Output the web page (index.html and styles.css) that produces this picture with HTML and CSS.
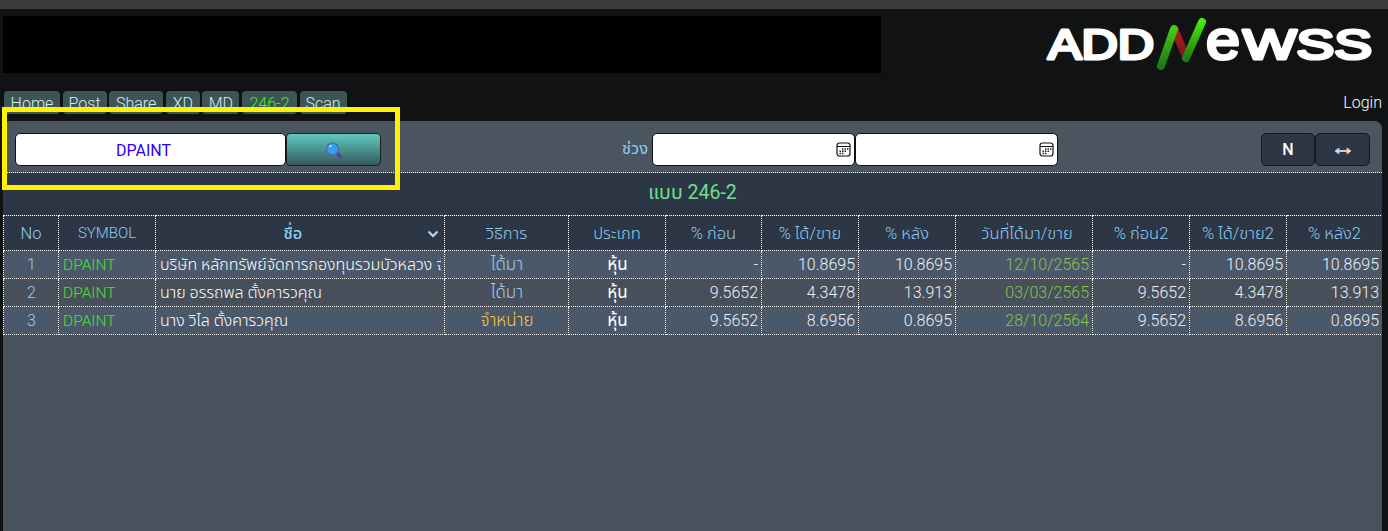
FILE: index.html
```html
<!DOCTYPE html>
<html lang="th">
<head>
<meta charset="utf-8">
<title>ADDNewss</title>
<link rel="stylesheet" href="styles.css">
</head>
<body>
<div class="topstrip"></div>
<header class="masthead">
  <div class="banner"></div>
  <svg class="logo" width="340" height="80" viewBox="0 -10 340 80" aria-label="ADDNewss">
    <defs>
      <linearGradient id="g1" x1="0" y1="1" x2="0" y2="0"><stop offset="0" stop-color="#1f7a14"/><stop offset="1" stop-color="#46c814"/></linearGradient>
      <linearGradient id="g2" x1="0" y1="1" x2="0" y2="0"><stop offset="0" stop-color="#1f7a14"/><stop offset="1" stop-color="#4ae80a"/></linearGradient>
      <linearGradient id="g3" x1="0" y1="0" x2="0" y2="1"><stop offset="0" stop-color="#c0161e"/><stop offset="1" stop-color="#6a1a1e"/></linearGradient>
    </defs>
    <text class="logo-word" x="8" y="49" textLength="106" lengthAdjust="spacingAndGlyphs">ADD</text>
    <text class="logo-word logo-e" x="166" y="49" textLength="34" lengthAdjust="spacingAndGlyphs">e</text>
    <text class="logo-word" x="203" y="49" textLength="129" lengthAdjust="spacingAndGlyphs">WSS</text>
    <path d="M131 22 L138 18 L150 46 L143 50 Z" fill="url(#g3)"/>
    <path d="M121 56 L134 19" stroke="url(#g1)" stroke-width="8" stroke-linecap="round" fill="none"/>
    <path d="M146 48 L162 12" stroke="url(#g2)" stroke-width="8" stroke-linecap="round" fill="none"/>
  </svg>
</header>
<nav class="tabs">
  <div class="tablist">
    <a class="tab">Home</a><a class="tab">Post</a><a class="tab">Share</a><a class="tab">XD</a><a class="tab">MD</a><a class="tab tab-active">246-2</a><a class="tab">Scan</a>
  </div>
  <a class="login">Login</a>
</nav>
<main class="panel">
  <section class="toolbar">
    <div class="search">
      <div class="field field-symbol">DPAINT</div>
      <button class="btn-search" type="button" aria-label="search">
        <svg width="18" height="18" viewBox="0 0 18 18">
          <path d="M10.5 11 L15.5 16" stroke="#5b3f9a" stroke-width="3.4" stroke-linecap="round"/>
          <circle cx="7.5" cy="8" r="6" fill="#35a0ee" stroke="#4a63b0" stroke-width="1.2"/>
          <circle cx="5.5" cy="5.3" r="1" fill="#dff2ff"/>
        </svg>
      </button>
    </div>
    <div class="range">
      <span class="range-label">ช่วง</span>
      <div class="field field-date"><svg class="cal" width="15" height="15" viewBox="0 0 15 15"><rect x="1" y="1" width="13" height="13" rx="2.5" fill="none" stroke="#111" stroke-width="1.2"/><path d="M1 4.5H14" stroke="#111" stroke-width="1.2"/><path d="M6 7h1.4M8.5 7h1.4M11 7h1.4M3.5 9.2h1.4M6 9.2h1.4M8.5 9.2h1.4M3.5 11.4h1.4M6 11.4h1.4" stroke="#111" stroke-width="1.5"/></svg></div>
      <div class="field field-date"><svg class="cal" width="15" height="15" viewBox="0 0 15 15"><rect x="1" y="1" width="13" height="13" rx="2.5" fill="none" stroke="#111" stroke-width="1.2"/><path d="M1 4.5H14" stroke="#111" stroke-width="1.2"/><path d="M6 7h1.4M8.5 7h1.4M11 7h1.4M3.5 9.2h1.4M6 9.2h1.4M8.5 9.2h1.4M3.5 11.4h1.4M6 11.4h1.4" stroke="#111" stroke-width="1.5"/></svg></div>
    </div>
    <div class="actions">
      <button class="btn-dark btn-n" type="button">N</button>
      <button class="btn-dark btn-arrow" type="button" aria-label="width">
        <svg width="18" height="8" viewBox="0 0 18 8"><path d="M4 4H14" stroke="#fff" stroke-width="1.3"/><path d="M5 1 L1 4 L5 7 Z" fill="#dfe8ff" stroke="#9fc4f0" stroke-width="1"/><path d="M13 1 L17 4 L13 7 Z" fill="#fff0d0" stroke="#e8b860" stroke-width="1"/></svg>
      </button>
    </div>
  </section>
  <h1 class="title">แบบ 246-2</h1>
  <table class="grid">
    <colgroup>
      <col class="c-55"><col class="c-97"><col class="c-289"><col class="c-124"><col class="c-97"><col class="c-96"><col class="c-97"><col class="c-97"><col class="c-137"><col class="c-97"><col class="c-97"><col class="c-96">
    </colgroup>
    <thead>
      <tr>
        <th>No</th><th class="th-symbol">SYMBOL</th>
        <th class="th-name">ชื่อ<svg class="chev" width="12" height="8" viewBox="0 0 12 8"><path d="M1.5 1.5 L6 6 L10.5 1.5" fill="none" stroke="#b6dcf2" stroke-width="2"/></svg></th>
        <th>วิธีการ</th><th>ประเภท</th><th>% ก่อน</th><th>% ได้/ขาย</th><th>% หลัง</th><th class="th-date">วันที่ได้มา/ขาย</th><th>% ก่อน2</th><th>% ได้/ขาย2</th><th>% หลัง2</th>
      </tr>
    </thead>
    <tbody>
      <tr><td class="num-c">1</td><td class="sym">DPAINT</td><td class="name"><div class="clip">บริษัท หลักทรัพย์จัดการกองทุนรวมบัวหลวง จำกัด</div></td><td class="how">ได้มา</td><td class="type">หุ้น</td><td class="r">-</td><td class="r">10.8695</td><td class="r">10.8695</td><td class="date">12/10/2565</td><td class="r">-</td><td class="r">10.8695</td><td class="r">10.8695</td></tr>
      <tr><td class="num-c">2</td><td class="sym">DPAINT</td><td class="name"><div class="clip">นาย อรรถพล ตั้งคารวคุณ</div></td><td class="how">ได้มา</td><td class="type">หุ้น</td><td class="r">9.5652</td><td class="r">4.3478</td><td class="r">13.913</td><td class="date">03/03/2565</td><td class="r">9.5652</td><td class="r">4.3478</td><td class="r">13.913</td></tr>
      <tr><td class="num-c">3</td><td class="sym">DPAINT</td><td class="name"><div class="clip">นาง วิไล ตั้งคารวคุณ</div></td><td class="how how-sell">จำหน่าย</td><td class="type">หุ้น</td><td class="r">9.5652</td><td class="r">8.6956</td><td class="r">0.8695</td><td class="date">28/10/2564</td><td class="r">9.5652</td><td class="r">8.6956</td><td class="r">0.8695</td></tr>
    </tbody>
  </table>
</main>
<div class="highlight"></div>
</body>
</html>
```
FILE: styles.css
```css
* { box-sizing: border-box; }
html, body { margin: 0; height: 100%; }
body {
  background: #111213;
  font-family: Roboto, "Noto Sans Thai", "Noto Sans", "DejaVu Sans", sans-serif;
  font-size: 16px;
  font-weight: 300;
  color: #fff;
  overflow: hidden;
  position: relative;
  display: flex;
  flex-direction: column;
  height: 531px;
}
.topstrip { height: 9px; background: #3c3c3c; flex: none; }
.masthead {
  flex: none;
  height: 82px;
  display: flex;
  justify-content: space-between;
  padding: 7px 8px 0 3px;
  position: relative;
}
.banner { width: 878px; height: 57px; background: #000; }
.logo { position: absolute; top: -9px; right: 8px; }
.logo-word {
  font-family: "Liberation Sans", sans-serif;
  font-weight: 400;
  font-size: 42px;
  fill: #fff;
  stroke: #fff;
  stroke-width: 3.2;
  stroke-linejoin: round;
  stroke-linecap: round;
}
.logo-e { font-size: 56px; }
.tabs {
  flex: none;
  height: 30px;
  display: flex;
  justify-content: space-between;
  padding: 0 6px 0 4px;
}
.tablist {
  display: grid;
  grid-template-columns: 56px 44px 54px 34px 37px 55px 47px;
  gap: 2.6px;
  height: 23px;
}
.tab {
  background: #3d5654;
  color: #d6ecf8;
  border-radius: 4px;
  padding-top: 4px;
  line-height: 18px;
  text-align: center;
}
.tab-active { color: #44ee22; }
.login { color: #fff; padding-top: 2px; line-height: 20px; }
.panel {
  flex: 1;
  margin: 0 6px 0 3px;
  background: #47525e;
  border-radius: 8px 8px 0 0;
  overflow: hidden;
}
.toolbar {
  height: 52px;
  padding: 12px 12px 0 12px;
  display: flex;
  border-bottom: 1px dotted #fff;
  background: #4a5560;
}
.search { display: flex; margin-right: 241px; }
.field {
  background: #fff;
  border: 1px solid #111;
  border-radius: 5px;
  height: 33px;
}
.field-symbol {
  width: 271px;
  padding-right: 14px;
  color: #2a00ff;
  font-weight: 400;
  text-align: center;
  line-height: 33px;
}
.btn-search {
  width: 95px;
  height: 33px;
  border: 1px solid #1a2222;
  border-radius: 4px;
  background: linear-gradient(#5fc9c0, #355a5a);
  padding: 0;
  display: flex;
  align-items: center;
  justify-content: center;
}
.range { display: flex; align-items: flex-start; }
.range-label { color: #90cdf4; font-size: 16.5px; margin-right: 4px; line-height: 32px; font-weight: 400; }
.field-date { width: 203px; display: flex; align-items: center; justify-content: flex-end; padding-right: 3px; }
.actions { display: flex; margin-left: auto; }
.btn-dark {
  width: 55px;
  height: 33px;
  background: #2c3644;
  border: 1px solid #14181f;
  border-radius: 5px;
  color: #fff;
  font: inherit;
  padding: 0;
  display: flex;
  align-items: center;
  justify-content: center;
}
.btn-n { width: 54px; font-weight: 500; }
.btn-arrow { padding-top: 3px; }
.title {
  margin: 0;
  height: 42px;
  background: #2c3644;
  color: #6fe08a;
  font-size: 19.5px;
  font-weight: 400;
  text-align: center;
  line-height: 40px;
}
.grid {
  width: 1379px;
  table-layout: fixed;
  border-collapse: collapse;
  border-top: 1px dotted #fff;
  margin: 0;
}
.c-55 { width: 55px; }
.c-97 { width: 97px; }
.c-96 { width: 96px; }
.c-289 { width: 289px; }
.c-124 { width: 124px; }
.c-137 { width: 137px; }
.grid th, .grid td { border: 1px dotted #fff; padding: 0; overflow: hidden; white-space: nowrap; }
.grid th {
  height: 35px;
  background: #2c3644;
  color: #90cdf4;
  font-size: 16.5px;
  font-weight: 300;
  text-align: center;
}
.grid th.th-symbol { font-size: 15px; }
.grid th.th-name { position: relative; font-weight: 500; padding-right: 14px; }
.grid th.th-date { padding-left: 6px; }
.chev { position: absolute; right: 5px; top: 14px; }
.grid td { height: 28px; padding: 0 3px 0 4px; color: #eef2f7; }
.grid tbody tr:nth-child(odd) td { background: #4a586a; }
.grid tbody tr:nth-child(even) td { background: #474f5a; }
.grid td.num-c { text-align: center; color: #90cdf4; }
.grid td.sym { color: #48e03a; font-size: 15.5px; font-weight: 300; }
.grid td.name { color: #fff; font-weight: 300; }
.clip { overflow: hidden; white-space: nowrap; }
.grid td.how { text-align: center; color: #a0cdee; font-size: 17px; }
.grid td.how-sell { color: #f8cb45; }
.grid td.type { text-align: center; color: #fff; font-size: 17px; font-weight: 400; }
.r { text-align: right; }
.grid td.date { text-align: right; color: #8ac24a; }
.highlight {
  position: absolute;
  left: 2px;
  top: 107px;
  width: 398px;
  height: 83px;
  border: 5px solid #fff200;
  pointer-events: none;
}
```
